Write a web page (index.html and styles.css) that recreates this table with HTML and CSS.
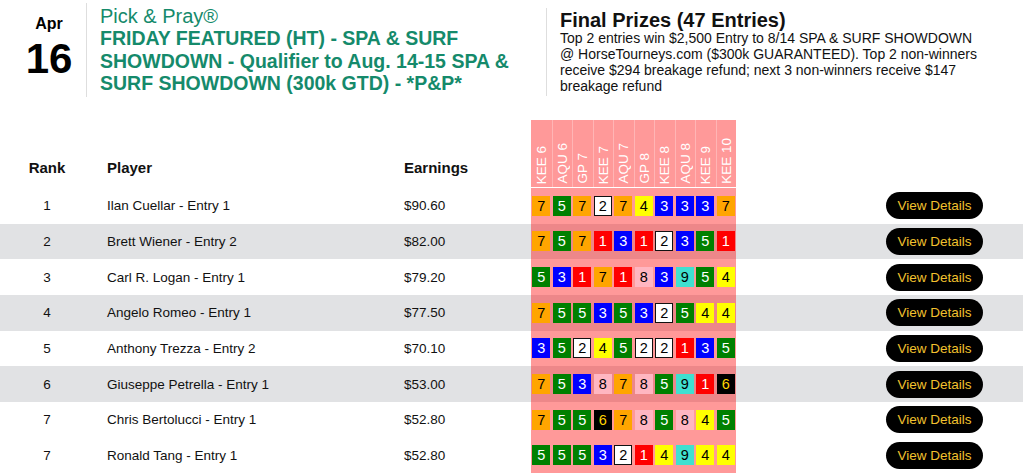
FILE: index.html
```html
<!DOCTYPE html>
<html lang="en">
<head>
<meta charset="utf-8">
<title>Pick &amp; Pray Leaderboard</title>
<link rel="stylesheet" href="styles.css">
</head>
<body>
<div class="top">
  <div class="date">
    <div class="month">Apr</div>
    <div class="day">16</div>
  </div>
  <div class="event">
    <div class="brand">Pick &amp; Pray®</div>
    <div class="title">FRIDAY FEATURED (HT) - SPA &amp; SURF SHOWDOWN - Qualifier to Aug. 14-15 SPA &amp; SURF SHOWDOWN (300k GTD) - *P&amp;P*</div>
  </div>
  <div class="prizes">
    <div class="prizes-title">Final Prizes (47 Entries)</div>
    <div class="prizes-text">Top 2 entries win $2,500 Entry to 8/14 SPA &amp; SURF SHOWDOWN @ HorseTourneys.com ($300k GUARANTEED). Top 2 non-winners receive $294 breakage refund; next 3 non-winners receive $147 breakage refund</div>
  </div>
</div>

<div class="board">
  <div class="row head">
    <div class="c-rank">Rank</div>
    <div class="c-player">Player</div>
    <div class="c-earn">Earnings</div>
    <div class="c-races races-head">
      <div class="rh"><span>KEE 6</span></div>
      <div class="rh"><span>AQU 6</span></div>
      <div class="rh"><span>GP 7</span></div>
      <div class="rh"><span>KEE 7</span></div>
      <div class="rh"><span>AQU 7</span></div>
      <div class="rh"><span>GP 8</span></div>
      <div class="rh"><span>KEE 8</span></div>
      <div class="rh"><span>AQU 8</span></div>
      <div class="rh"><span>KEE 9</span></div>
      <div class="rh"><span>KEE 10</span></div>
    </div>
    <div class="c-act"></div>
  </div>

  <div class="row">
    <div class="c-rank">1</div>
    <div class="c-player">Ilan Cuellar - Entry 1</div>
    <div class="c-earn">$90.60</div>
    <div class="c-races">
      <span class="pp p7">7</span><span class="pp p5">5</span><span class="pp p7">7</span><span class="pp p2">2</span><span class="pp p7">7</span><span class="pp p4">4</span><span class="pp p3">3</span><span class="pp p3">3</span><span class="pp p3">3</span><span class="pp p7">7</span>
    </div>
    <div class="c-act"><button class="btn">View Details</button></div>
  </div>

  <div class="row alt">
    <div class="c-rank">2</div>
    <div class="c-player">Brett Wiener - Entry 2</div>
    <div class="c-earn">$82.00</div>
    <div class="c-races">
      <span class="pp p7">7</span><span class="pp p5">5</span><span class="pp p7">7</span><span class="pp p1">1</span><span class="pp p3">3</span><span class="pp p1">1</span><span class="pp p2">2</span><span class="pp p3">3</span><span class="pp p5">5</span><span class="pp p1">1</span>
    </div>
    <div class="c-act"><button class="btn">View Details</button></div>
  </div>

  <div class="row">
    <div class="c-rank">3</div>
    <div class="c-player">Carl R. Logan - Entry 1</div>
    <div class="c-earn">$79.20</div>
    <div class="c-races">
      <span class="pp p5">5</span><span class="pp p3">3</span><span class="pp p1">1</span><span class="pp p7">7</span><span class="pp p1">1</span><span class="pp p8">8</span><span class="pp p3">3</span><span class="pp p9">9</span><span class="pp p5">5</span><span class="pp p4">4</span>
    </div>
    <div class="c-act"><button class="btn">View Details</button></div>
  </div>

  <div class="row alt">
    <div class="c-rank">4</div>
    <div class="c-player">Angelo Romeo - Entry 1</div>
    <div class="c-earn">$77.50</div>
    <div class="c-races">
      <span class="pp p7">7</span><span class="pp p5">5</span><span class="pp p5">5</span><span class="pp p3">3</span><span class="pp p5">5</span><span class="pp p3">3</span><span class="pp p2">2</span><span class="pp p5">5</span><span class="pp p4">4</span><span class="pp p4">4</span>
    </div>
    <div class="c-act"><button class="btn">View Details</button></div>
  </div>

  <div class="row">
    <div class="c-rank">5</div>
    <div class="c-player">Anthony Trezza - Entry 2</div>
    <div class="c-earn">$70.10</div>
    <div class="c-races">
      <span class="pp p3">3</span><span class="pp p5">5</span><span class="pp p2">2</span><span class="pp p4">4</span><span class="pp p5">5</span><span class="pp p2">2</span><span class="pp p2">2</span><span class="pp p1">1</span><span class="pp p3">3</span><span class="pp p5">5</span>
    </div>
    <div class="c-act"><button class="btn">View Details</button></div>
  </div>

  <div class="row alt">
    <div class="c-rank">6</div>
    <div class="c-player">Giuseppe Petrella - Entry 1</div>
    <div class="c-earn">$53.00</div>
    <div class="c-races">
      <span class="pp p7">7</span><span class="pp p5">5</span><span class="pp p3">3</span><span class="pp p8">8</span><span class="pp p7">7</span><span class="pp p8">8</span><span class="pp p5">5</span><span class="pp p9">9</span><span class="pp p1">1</span><span class="pp p6">6</span>
    </div>
    <div class="c-act"><button class="btn">View Details</button></div>
  </div>

  <div class="row">
    <div class="c-rank">7</div>
    <div class="c-player">Chris Bertolucci - Entry 1</div>
    <div class="c-earn">$52.80</div>
    <div class="c-races">
      <span class="pp p7">7</span><span class="pp p5">5</span><span class="pp p5">5</span><span class="pp p6">6</span><span class="pp p7">7</span><span class="pp p8">8</span><span class="pp p5">5</span><span class="pp p8">8</span><span class="pp p4">4</span><span class="pp p5">5</span>
    </div>
    <div class="c-act"><button class="btn">View Details</button></div>
  </div>

  <div class="row">
    <div class="c-rank">7</div>
    <div class="c-player">Ronald Tang - Entry 1</div>
    <div class="c-earn">$52.80</div>
    <div class="c-races">
      <span class="pp p5">5</span><span class="pp p5">5</span><span class="pp p5">5</span><span class="pp p3">3</span><span class="pp p2">2</span><span class="pp p1">1</span><span class="pp p4">4</span><span class="pp p9">9</span><span class="pp p4">4</span><span class="pp p4">4</span>
    </div>
    <div class="c-act"><button class="btn">View Details</button></div>
  </div>
</div>
</body>
</html>
```

FILE: styles.css
```css
* { box-sizing: border-box; }

html, body {
  margin: 0;
  padding: 0;
  background: #ffffff;
  color: #111111;
  font-family: "Liberation Sans", Arial, Helvetica, sans-serif;
}

body { overflow: hidden; }

/* ---------- top header ---------- */
.top {
  display: flex;
  align-items: flex-start;
}

.date {
  width: 74px;
  margin-left: 12px;
  padding-top: 15px;
  text-align: center;
  font-weight: bold;
  color: #000;
}

.month {
  font-size: 16px;
  line-height: 18px;
}

.day {
  font-size: 42px;
  line-height: 44px;
  margin-top: 4px;
}

.event {
  width: 450px;
  margin-top: 3px;
  padding: 3px 0 2px 13px;
  border-left: 1px solid #dedede;
  color: #158a6b;
}

.brand {
  font-size: 20px;
  line-height: 21px;
}

.title {
  font-size: 19.5px;
  line-height: 22.5px;
  font-weight: bold;
}

.prizes {
  width: 440px;
  margin-left: 10px;
  margin-top: 8px;
  padding: 2px 0 2px 13px;
  border-left: 1px solid #dedede;
  color: #111;
}

.prizes-title {
  font-size: 20px;
  line-height: 20px;
  font-weight: bold;
}

.prizes-text {
  width: 426px;
  font-size: 14px;
  line-height: 16px;
}

/* ---------- leaderboard ---------- */
.board {
  margin-top: 23.5px;
}

.row {
  display: grid;
  grid-template-columns: 94px 297px 140px 205px 1fr;
  height: 35.66px;
  font-size: 13.5px;
  align-items: center;
}

.row.alt { background: #e1e2e4; }

.row.head {
  height: 68px;
  align-items: end;
  font-size: 15px;
  font-weight: bold;
}

.row.head > .c-rank,
.row.head > .c-player,
.row.head > .c-earn {
  padding-bottom: 12px;
}

.c-rank { text-align: center; }
.c-player { padding-left: 13px; }
.c-earn { padding-left: 13px; }

.c-races {
  align-self: stretch;
  display: grid;
  grid-template-columns: repeat(10, 1fr);
  align-items: center;
  justify-items: center;
  background: rgba(255, 0, 0, 0.4);
}

.races-head {
  align-items: stretch;
  border-bottom: 1px solid #fff;
}

.rh {
  display: flex;
  align-items: flex-end;
  justify-content: center;
  width: 100%;
  padding-bottom: 3px;
  border-left: 1px solid rgba(255, 255, 255, 0.28);
}

.rh:first-child { border-left: none; }

.rh span {
  writing-mode: vertical-rl;
  transform: rotate(180deg);
  color: #ffffff;
  font-weight: normal;
  font-size: 13.5px;
  line-height: 15px;
  white-space: nowrap;
}

.pp {
  width: 18px;
  height: 20px;
  display: flex;
  align-items: center;
  justify-content: center;
  font-size: 14.5px;
  line-height: 1;
}

.p1 { background: #ff0000; color: #fff; }
.p2 { background: #ffffff; color: #000; border: 1.5px solid #111; }
.p3 { background: #0000ff; color: #fff; }
.p4 { background: #ffff00; color: #000; }
.p5 { background: #008000; color: #fff; }
.p6 { background: #000000; color: #ffd400; }
.p7 { background: #ffa500; color: #000; }
.p8 { background: #ffb6c1; color: #000; }
.p9 { background: #40e0d0; color: #000; }

.c-act {
  padding-left: 150px;
}

.btn {
  display: block;
  width: 97px;
  height: 27px;
  border: none;
  border-radius: 14px;
  background: #000;
  color: #f2c12e;
  font-family: "Liberation Sans", Arial, Helvetica, sans-serif;
  font-size: 13.5px;
  padding: 0;
  cursor: pointer;
}
```
